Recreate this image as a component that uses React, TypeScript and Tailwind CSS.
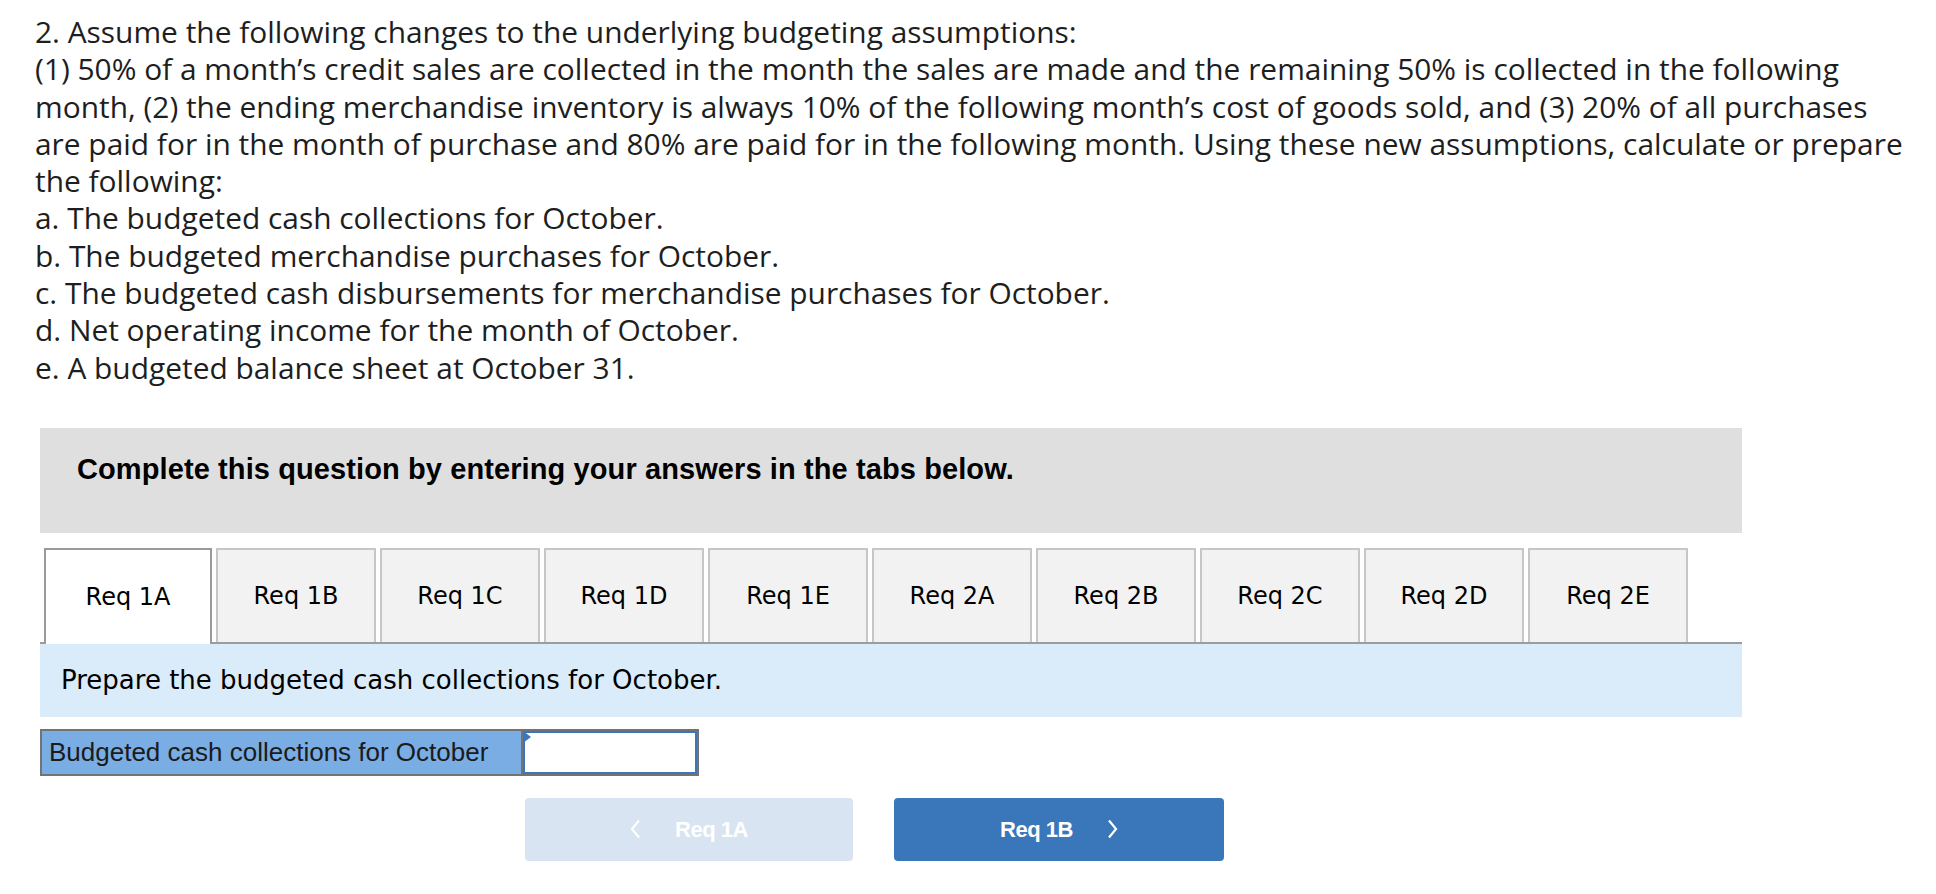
import React from "react";

const lines = [
  "2. Assume the following changes to the underlying budgeting assumptions:",
  "(1) 50% of a month\u2019s credit sales are collected in the month the sales are made and the remaining 50% is collected in the following",
  "month, (2) the ending merchandise inventory is always 10% of the following month\u2019s cost of goods sold, and (3) 20% of all purchases",
  "are paid for in the month of purchase and 80% are paid for in the following month. Using these new assumptions, calculate or prepare",
  "the following:",
  "a. The budgeted cash collections for October.",
  "b. The budgeted merchandise purchases for October.",
  "c. The budgeted cash disbursements for merchandise purchases for October.",
  "d. Net operating income for the month of October.",
  "e. A budgeted balance sheet at October 31.",
];

const tabs = ["Req 1A", "Req 1B", "Req 1C", "Req 1D", "Req 1E", "Req 2A", "Req 2B", "Req 2C", "Req 2D", "Req 2E"];

function ChevronLeft() {
  return (
    <svg width="11" height="20" viewBox="0 0 11 20" fill="none">
      <polyline points="9,1.5 2,10 9,18.5" stroke="white" strokeWidth="2.2" strokeLinejoin="miter" />
    </svg>
  );
}

function ChevronRight() {
  return (
    <svg width="11" height="20" viewBox="0 0 11 20" fill="none">
      <polyline points="2,1.5 9,10 2,18.5" stroke="white" strokeWidth="2.2" strokeLinejoin="miter" />
    </svg>
  );
}

export default function App() {
  return (
    <div className="w-[1936px] h-[894px] overflow-hidden bg-white">
      <div
        className="pl-[35px] pt-[13px] text-[29.9px] leading-[37.3px] text-[#1e1e1e]"
        style={{ fontFamily: "'Open Sans', Lato, sans-serif" }}
      >
        {lines.map((l, i) => (
          <div key={i} className="whitespace-nowrap">
            {l}
          </div>
        ))}
      </div>

      <div className="ml-[40px] w-[1702px] mt-[42px]">
        <div
          className="h-[105px] bg-[#dfdfdf] pl-[37px] pt-[26px] text-[29px] leading-[30px] font-bold text-black tracking-[0.1px]"
          style={{ fontFamily: "'Liberation Sans', Arial, sans-serif" }}
        >
          Complete this question by entering your answers in the tabs below.
        </div>

        <div
          className="mt-[15px] flex items-end gap-[4px] pl-[4px] border-b-2 border-[#9c9c9c] h-[96px]"
          style={{ fontFamily: "'DejaVu Sans', Verdana, sans-serif" }}
        >
          {tabs.map((t, i) =>
            i === 0 ? (
              <div
                key={t}
                className="relative -mb-[2px] w-[168px] h-[96px] bg-white border-2 border-b-0 border-[#9a9a9a] flex items-center justify-center text-[24px] text-black"
              >
                {t}
              </div>
            ) : (
              <div
                key={t}
                className="w-[160px] h-[94px] bg-[#f2f2f2] border-2 border-b-0 border-[#c6c6c6] flex items-center justify-center text-[24px] text-black"
              >
                {t}
              </div>
            )
          )}
        </div>

        <div
          className="h-[73px] bg-[#daebf9] flex items-center pl-[21px] text-[26px] text-black"
          style={{ fontFamily: "'DejaVu Sans', Verdana, sans-serif" }}
        >
          Prepare the budgeted cash collections for October.
        </div>

        <div className="mt-[12px] flex">
          <div className="flex h-[47px] border-2 border-[#737373]">
            <div
              className="w-[481px] bg-[#79ade3] flex items-center pl-[7px] text-[26px] text-[#1b1b1b] border-r-2 border-[#737373]"
              style={{ fontFamily: "'Liberation Sans', Arial, sans-serif" }}
            >
              Budgeted cash collections for October
            </div>
            <div className="relative w-[174px] bg-white border-2 border-[#3b76bd]">
              <div className="absolute -left-[2px] -top-[2px] w-0 h-0 border-t-[6px] border-b-[6px] border-l-[8px] border-t-transparent border-b-transparent border-l-[#3b76bd]" />
            </div>
          </div>
        </div>

        <div
          className="mt-[22px] ml-[485px] flex gap-[41px]"
          style={{ fontFamily: "'Liberation Sans', Arial, sans-serif" }}
        >
          <div className="w-[328px] h-[63px] rounded-[4px] bg-[#d8e4f1] flex items-center justify-center gap-[34px] text-white font-bold text-[22px] tracking-[-0.5px]">
            <ChevronLeft />
            <span>Req 1A</span>
          </div>
          <div className="w-[330px] h-[63px] rounded-[4px] bg-[#3a76ba] flex items-center justify-center gap-[34px] text-white font-bold text-[22px] tracking-[-0.5px]">
            <span>Req 1B</span>
            <ChevronRight />
          </div>
        </div>
      </div>
    </div>
  );
}
